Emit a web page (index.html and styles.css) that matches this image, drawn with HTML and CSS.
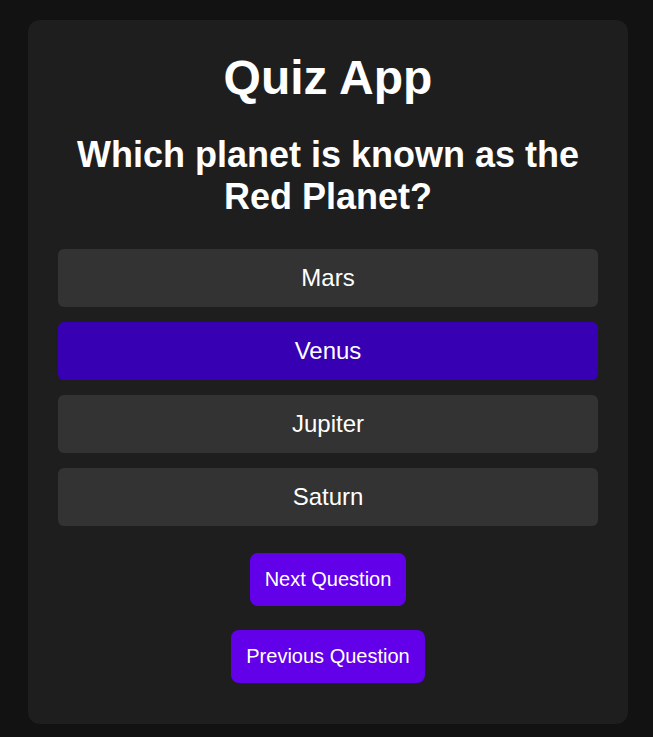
FILE: index.html
```html
<!DOCTYPE html>
<html lang="en">
<head>
<meta charset="utf-8">
<title>Quiz App</title>
<link rel="stylesheet" href="styles.css">
</head>
<body>
<main class="card">
  <h1 class="title">Quiz App</h1>
  <h2 class="question">Which planet is known as the Red Planet?</h2>
  <div class="options">
    <button class="option">Mars</button>
    <button class="option selected">Venus</button>
    <button class="option">Jupiter</button>
    <button class="option">Saturn</button>
  </div>
  <div class="controls">
    <button class="nav-btn">Next Question</button>
    <button class="nav-btn">Previous Question</button>
  </div>
</main>
</body>
</html>
```
FILE: styles.css
```css
html, body {
  margin: 0;
  padding: 0;
  background: #121212;
  font-family: "Liberation Sans", Arial, sans-serif;
  color: #ffffff;
}

body {
  padding: 20px 0 13px 28px;
}

.card {
  box-sizing: border-box;
  width: 600px;
  background: #1e1e1e;
  border-radius: 12px;
  padding: 30px 30px 41px;
  text-align: center;
}

.title {
  margin: 0 0 29px;
  font-size: 48px;
  font-weight: bold;
  line-height: normal;
}

.question {
  margin: 0 0 31px;
  font-size: 36px;
  font-weight: bold;
  line-height: normal;
}

.options {
  display: flex;
  flex-direction: column;
  gap: 15px;
  margin-bottom: 27px;
}

.option {
  display: block;
  width: 100%;
  border: none;
  border-radius: 6px;
  background: #333333;
  color: #ffffff;
  font-family: inherit;
  font-size: 24px;
  line-height: 28px;
  padding: 15px;
  cursor: pointer;
}

.option.selected {
  background: #3700b3;
}

.controls {
  display: flex;
  flex-direction: column;
  align-items: center;
  gap: 24px;
}

.nav-btn {
  border: none;
  border-radius: 8px;
  background: #6200ea;
  color: #ffffff;
  font-family: inherit;
  font-size: 20px;
  line-height: 23px;
  padding: 15px;
  cursor: pointer;
}
```
